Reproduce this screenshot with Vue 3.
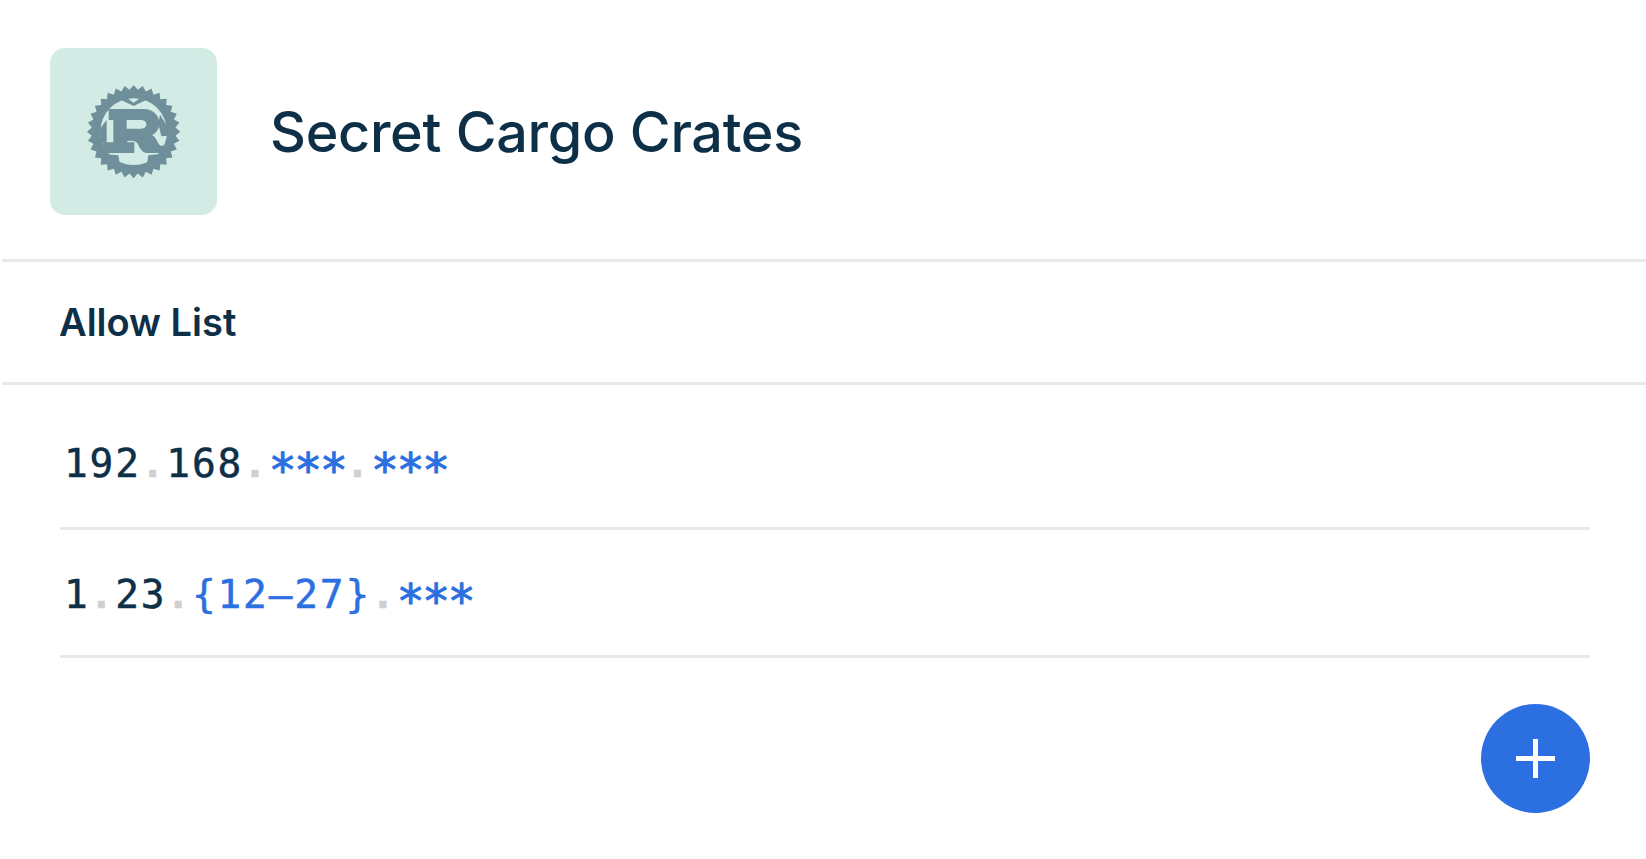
<script setup>
import { computed } from 'vue'

const rows = [
  [
    { t: '192', c: 'num' }, { t: '.', c: 'dot' }, { t: '168', c: 'num' }, { t: '.', c: 'dot' },
    { t: '***', c: 'star' }, { t: '.', c: 'dot' }, { t: '***', c: 'star' }
  ],
  [
    { t: '1', c: 'num' }, { t: '.', c: 'dot' }, { t: '23', c: 'num' }, { t: '.', c: 'dot' },
    { t: '{12–27}', c: 'blue' }, { t: '.', c: 'dot' }, { t: '***', c: 'star' }
  ]
]

// gear outline for the rust logo
const gearPoints = computed(() => {
  const teeth = 32
  const pts = []
  for (let i = 0; i < teeth; i++) {
    const a = (i / teeth) * Math.PI * 2 - Math.PI / 2
    const step = Math.PI / teeth
    const p = (r, ang) => `${(143 + r * Math.cos(ang)).toFixed(1)},${(143 + r * Math.sin(ang)).toFixed(1)}`
    pts.push(p(140, a))
    pts.push(p(126, a + step))
  }
  return pts.join(' ')
})
</script>

<template>
  <div class="page">
    <header class="head">
      <div class="tile">
        <svg class="rust" viewBox="0 0 288 288" width="96" height="96">
          <polygon :points="gearPoints" class="ink" />
          <circle cx="143" cy="143" r="100" fill="#d3ebe5" />
          <path class="ink" d="M118 38 L143 56 L168 38 L185 46 L143 66 L101 46 Z" />
          <path class="ink" d="M41 135 L62 108 L62 176 L46 176 Z" />
          <path class="ink" d="M222 92 L246 130 L246 155 L226 157 L217 120 Z" />
          <path class="ink" d="M68 75 H172 C205 75 220 98 220 118 C220 138 208 148 198 154 C210 158 212 172 220 182 C226 188 234 186 245 178 L228 207 H184 C166 207 160 188 154 178 C150 171 142 170 124 170 V175 H145 V207 H50 V175 H82 V108 H68 Z M122 108 V134 H165 C176 134 181 128 181 120 C181 113 174 108 164 108 Z" fill-rule="evenodd" />
          <path class="ink" d="M60 211 L97 214 L102 245 H182 L187 214 L228 209 L205 240 L175 262 L110 262 L80 240 Z" />
        </svg>
      </div>
      <h1 class="title">Secret Cargo Crates</h1>
    </header>

    <div class="section">Allow List</div>

    <div class="list">
      <div v-for="(row, i) in rows" :key="i" class="row">
        <span v-for="(part, j) in row" :key="j" :class="part.c">{{ part.t }}</span>
      </div>
    </div>

    <div class="actions">
      <button type="button" class="add" aria-label="Add">
        <svg viewBox="0 0 39 39" width="39" height="39">
          <path d="M19.5 0V39M0 19.5H39" stroke="#fff" stroke-width="5" />
        </svg>
      </button>
    </div>
  </div>
</template>

<style scoped>
.page {
  width: 1646px;
  height: 859px;
  padding-left: 2px;
  box-sizing: border-box;
  background: #fff;
  color: #0d2f47;
  font-family: Inter, "Liberation Sans", sans-serif;
  overflow: hidden;
}

.head {
  display: flex;
  align-items: center;
  gap: 53px;
  height: 259px;
  padding-left: 48px;
  border-bottom: 3px solid #e8eaea;
}

.tile {
  width: 167px;
  height: 167px;
  margin-top: 4px;
  border-radius: 15px;
  background: #d3ebe5;
  display: flex;
  align-items: center;
  justify-content: center;
}

.ink {
  fill: #6f8f9b;
}

.title {
  margin: 4px 0 0;
  font-size: 55.7px;
  font-weight: 500;
  letter-spacing: -0.3px;
}

.section {
  height: 120px;
  line-height: 120px;
  padding-left: 57px;
  font-size: 38px;
  font-weight: 600;
  border-bottom: 3px solid #e8eaea;
}

.list {
  margin: 0 56px 0 58px;
}

.row {
  height: 125px;
  line-height: 128px;
  padding-left: 4px;
  font-family: "DejaVu Sans Mono", monospace;
  font-size: 39.5px;
  letter-spacing: 1.8px;
  border-bottom: 3px solid #e8eaea;
  white-space: pre;
  -webkit-text-stroke: 0.5px currentColor;
}

.row:first-child {
  height: 142px;
  line-height: 156px;
}

.num {
  color: #0d2f47;
}

.blue {
  color: #2b6fe0;
}

.star {
  color: #2b6fe0;
  font-size: 46px;
  letter-spacing: -2.1px;
  line-height: 1;
  vertical-align: -9px;
  -webkit-text-stroke: 1px currentColor;
}

.dot {
  color: #d0d0d0;
  font-weight: 700;
}

.actions {
  display: flex;
  justify-content: flex-end;
  margin: 46px 56px 0 0;
}

.add {
  width: 109px;
  height: 109px;
  padding: 0;
  border: none;
  border-radius: 50%;
  background: #2b6fe0;
  display: flex;
  align-items: center;
  justify-content: center;
}
</style>
